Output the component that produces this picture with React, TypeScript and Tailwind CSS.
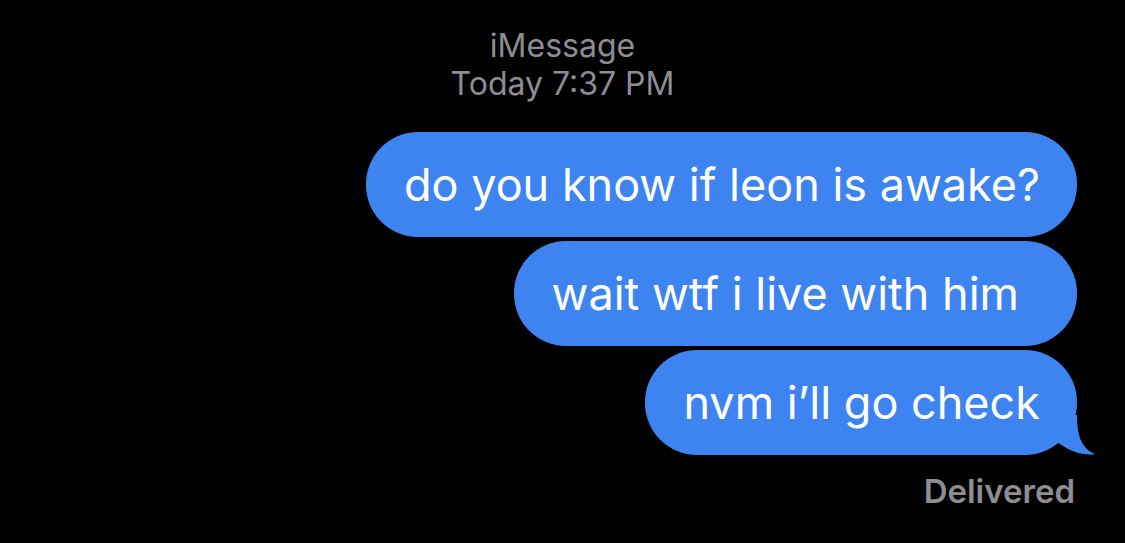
export default function App() {
    const messages = [
        { text: "do you know if leon is awake?", pr: "pr-[37px]" },
        { text: "wait wtf i live with him", pr: "pr-[58px]" },
        { text: "nvm i’ll go check", pr: "pr-[37px]" },
    ]

    return (
        <div className="w-full h-[543px] bg-black overflow-hidden font-['Inter','Liberation_Sans',sans-serif]">
            <div className="pt-[27px] flex flex-col items-center text-[#8d8d93] text-[32px] leading-[38px]">
                <div>iMessage</div>
                <div>Today 7:37 PM</div>
            </div>

            <div className="mt-[29px] pr-[48px] flex flex-col items-end gap-[4px]">
                {messages.map((m, i) => (
                    <div
                        key={i}
                        className={`relative h-[105px] flex items-center pl-[38px] ${m.pr} rounded-[52px] bg-[#3d84f1] text-white text-[45px] whitespace-nowrap`}
                    >
                        {m.text}
                        {/* tail on the last bubble */}
                        {i === messages.length - 1 && (
                            <svg className="absolute left-[calc(100%-30px)] top-[calc(100%-40px)]" width="50" height="42" viewBox="0 0 50 42">
                                <path
                                    d="M0 0 L30 0 C30 20 34 33 48 39 C38 41 24 37 13 29 L0 20 Z"
                                    fill="#3d84f1"
                                />
                            </svg>
                        )}
                    </div>
                ))}
            </div>

            <div className="pr-[50px] mt-[16px] text-right text-[#8d8d93] text-[33px] leading-[40px] font-semibold">Delivered</div>
        </div>
    )
}
